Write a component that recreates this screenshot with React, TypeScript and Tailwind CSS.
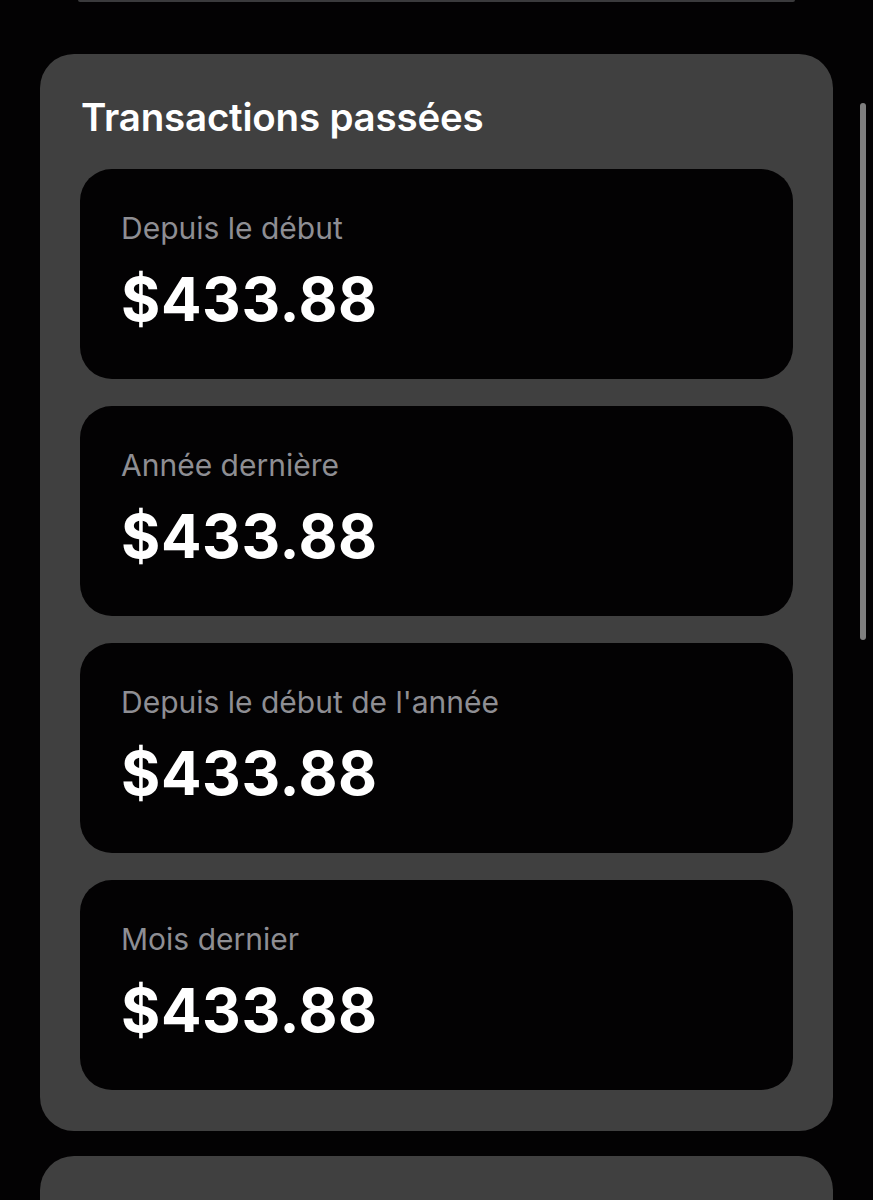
export default function App() {
  const rows = [
    "Depuis le début",
    "Année dernière",
    "Depuis le début de l'année",
    "Mois dernier",
  ];

  return (
    <main
      className="relative min-h-[1200px] h-[1200px] overflow-hidden bg-[#030203] text-white"
      style={{ fontFamily: "Inter, 'Noto Sans', sans-serif" }}
    >
      {/* bottom edge of the previous card */}
      <div className="mx-[78px] h-[2px] rounded-b-full bg-[#3a3a3c]" />

      <section className="mx-[40px] mt-[52px] w-[793px] rounded-[34px] bg-[#404040] px-[40px] pt-[40px] pb-[41px]">
        <h1 className="ml-[1px] text-[38.5px] font-semibold leading-[46px] tracking-[-0.2px]">
          Transactions passées
        </h1>

        <div className="mt-[29px] flex flex-col gap-[27px]">
          {rows.map((label) => (
            <div
              key={label}
              className="h-[210px] rounded-[32px] bg-[#030203] px-[41px] pt-[41px]"
            >
              <p className="text-[30px] leading-[36px] text-[#8e8e93]">
                {label}
              </p>
              <p className="mt-[19px] text-[60px] font-bold leading-[68px] tracking-[0.6px]">
                $433.88
              </p>
            </div>
          ))}
        </div>
      </section>

      <div className="mx-[40px] mt-[25px] h-[80px] w-[793px] rounded-t-[34px] bg-[#404040]" />

      {/* scroll indicator */}
      <div className="absolute left-[860px] top-[103px] h-[537px] w-[6px] rounded-full bg-[#7f7f7f]" />
    </main>
  );
}
